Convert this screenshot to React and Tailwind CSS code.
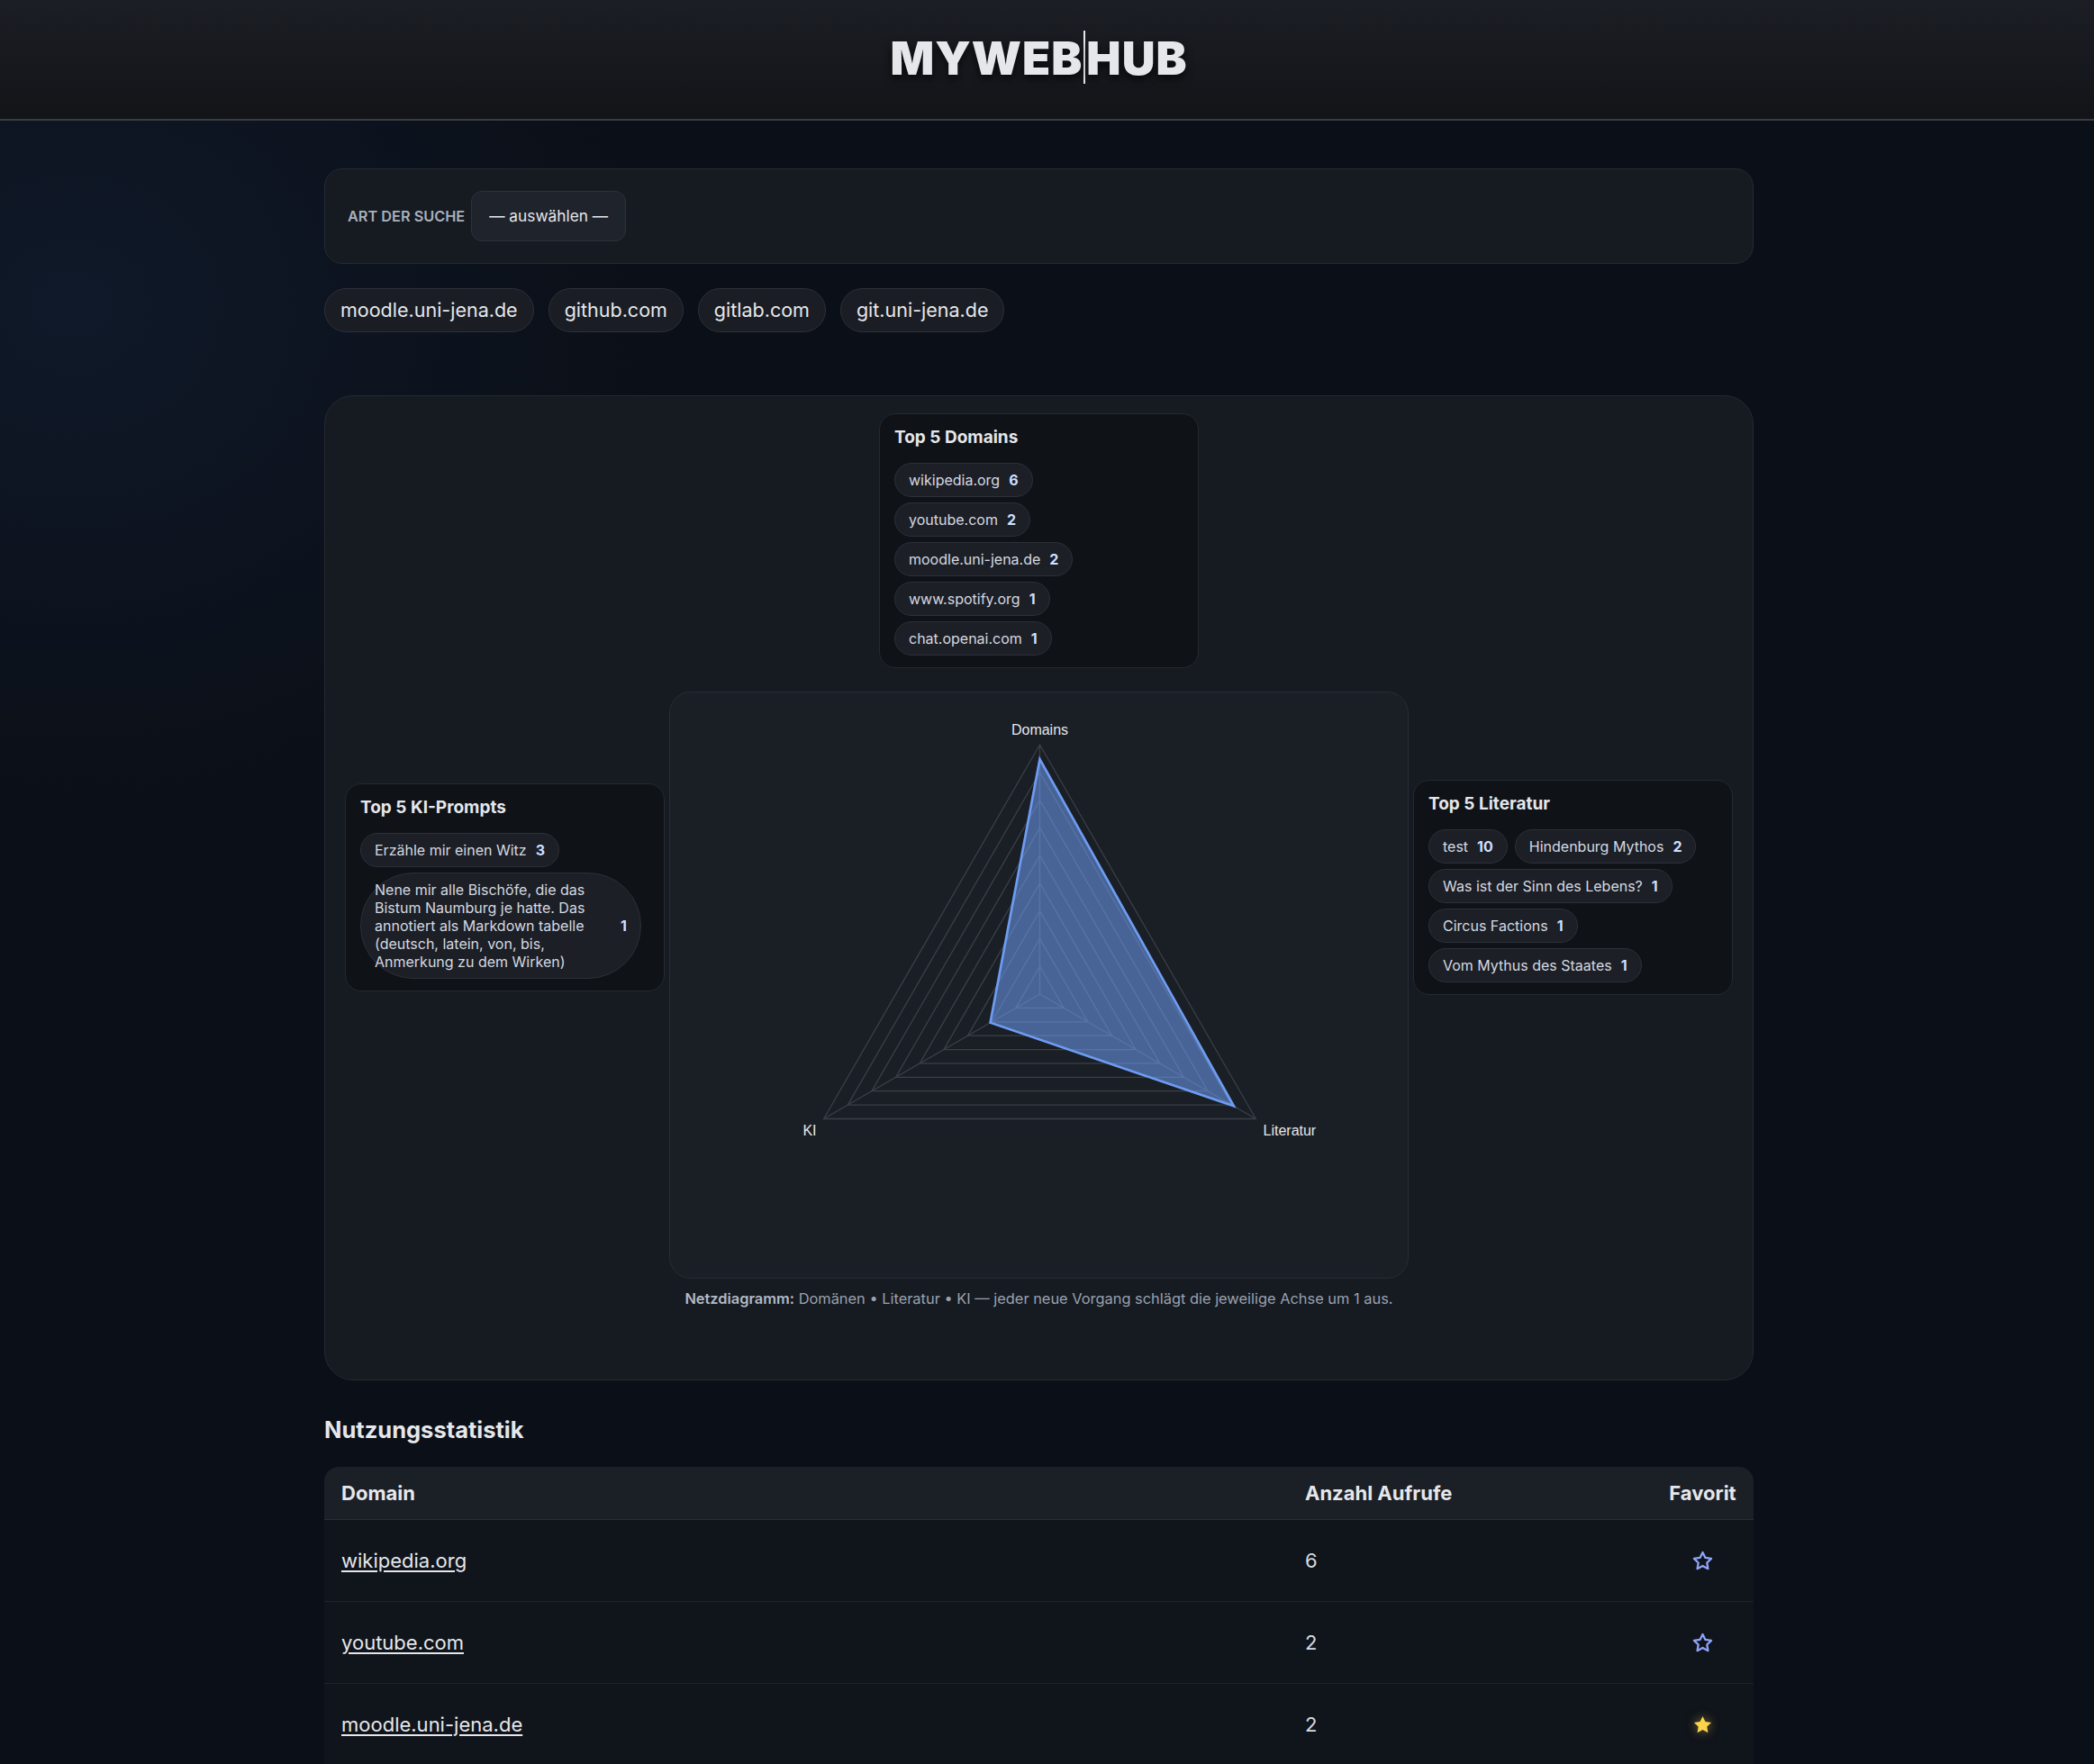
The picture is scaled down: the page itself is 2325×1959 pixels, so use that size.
import React from 'react';

const quickLinks = ['moodle.uni-jena.de', 'github.com', 'gitlab.com', 'git.uni-jena.de'];

const topDomains = [
  ['wikipedia.org', 6],
  ['youtube.com', 2],
  ['moodle.uni-jena.de', 2],
  ['www.spotify.org', 1],
  ['chat.openai.com', 1],
];

const topPrompts = [
  ['Erzähle mir einen Witz', 3],
  ['Nene mir alle Bischöfe, die das Bistum Naumburg je hatte. Das annotiert als Markdown tabelle (deutsch, latein, von, bis, Anmerkung zu dem Wirken)', 1],
];

const topLiteratur = [
  ['test', 10],
  ['Hindenburg Mythos', 2],
  ['Was ist der Sinn des Lebens?', 1],
  ['Circus Factions', 1],
  ['Vom Mythus des Staates', 1],
];

const stats = [
  { domain: 'wikipedia.org', count: 6, fav: false },
  { domain: 'youtube.com', count: 2, fav: false },
  { domain: 'moodle.uni-jena.de', count: 2, fav: true },
  { domain: 'www.spotify.org', count: 1, fav: false },
  { domain: 'chat.openai.com', count: 1, fav: false },
];

function Chip({ label, count }) {
  return (
    <span className="inline-flex max-w-[312px] items-center gap-[10px] rounded-full border border-[#2c3038] bg-[#1c1f26] px-[15px] py-[8px] text-[16px] leading-[20px] text-[#d5d9e0]">
      <span className="min-w-0">{label}</span>
      <b className="shrink-0 font-bold text-[#cddfff]">{count}</b>
    </span>
  );
}

function TopBox({ title, items, column, className = '' }) {
  return (
    <div className={`w-[355px] rounded-[18px] border border-[#252930] bg-[#0f1217] px-[16px] pt-[13px] pb-[13px] ${className}`}>
      <h3 className="mb-[15px] text-[19px] font-bold leading-[26px] text-[#e5e7eb]">{title}</h3>
      <div className={column ? 'flex flex-col items-start gap-[6px]' : 'flex flex-wrap gap-x-[8px] gap-y-[6px]'}>
        {items.map(([label, count]) => (
          <Chip key={label} label={label} count={count} />
        ))}
      </div>
    </div>
  );
}

function Radar() {
  const cx = 410, cy = 335, R = 277;
  const angles = [-90, 30, 150].map((a) => (a * Math.PI) / 180);
  const pt = (r, i) => [cx + r * Math.cos(angles[i]), cy + r * Math.sin(angles[i])];
  const poly = (rs) => rs.map((r, i) => pt(r, i).join(',')).join(' ');
  const rings = Array.from({ length: 9 }, (_, k) => (R * (k + 1)) / 9);
  // Domains, Literatur, KI
  const values = [0.942, 0.898, 0.229];

  return (
    <svg viewBox="0 0 818 650" className="block h-full w-full">
      {rings.map((r) => (
        <polygon key={r} points={poly([r, r, r])} fill="none" stroke="#3b3f47" strokeWidth="1.3" />
      ))}
      {[0, 1, 2].map((i) => {
        const [x, y] = pt(R, i);
        return <line key={i} x1={cx} y1={cy} x2={x} y2={y} stroke="#3b3f47" strokeWidth="1.3" />;
      })}
      <polygon
        points={poly(values.map((v) => v * R))}
        fill="rgba(112,158,245,0.55)"
        stroke="#6d9cf2"
        strokeWidth="2.7"
      />
      <g fill="#e5e7eb" fontSize="16" fontFamily="'Liberation Sans', Arial, sans-serif">
        <text x={cx} y="47" textAnchor="middle">Domains</text>
        <text x="658" y="492">Literatur</text>
        <text x="162" y="492" textAnchor="end">KI</text>
      </g>
    </svg>
  );
}

function Star({ filled }) {
  const points = '12,2 15.09,8.26 22,9.27 17,14.14 18.18,21.02 12,17.77 5.82,21.02 7,14.14 2,9.27 8.91,8.26';
  if (filled) {
    return (
      <svg width="23" height="23" viewBox="0 0 24 24" className="drop-shadow-[0_0_6px_rgba(252,211,77,0.5)]">
        <polygon points={points} fill="#fcd34d" />
      </svg>
    );
  }
  return (
    <svg width="23" height="23" viewBox="0 0 24 24">
      <polygon points={points} fill="none" stroke="#8fa3f8" strokeWidth="2.4" strokeLinejoin="round" />
    </svg>
  );
}

export default function App() {
  return (
    <div className="min-h-screen bg-[#0b0f17] bg-[radial-gradient(650px_560px_at_80px_340px,#0f1929,transparent)] font-['Inter',sans-serif] text-[#e5e7eb]">
      <header className="h-[134px] border-b-2 border-[#3a3c41] bg-[linear-gradient(180deg,#1b1e24,#121418)] pr-[18px]">
        <div className="flex h-full items-center justify-center pb-[5px]">
          <h1 className="text-[51px] font-black leading-none tracking-[0.02em] text-[#e5e7eb] [text-shadow:0_4px_10px_rgba(0,0,0,0.7)]">
            MYWEB
            <span className="mx-[1px] inline-block h-[59px] w-[2px] bg-[#e5e7eb] align-[-10px]" />
            HUB
          </h1>
        </div>
      </header>

      <main className="pr-[18px] pb-[80px]">
        <div className="mx-auto w-[1587px] pt-[53px]">
          <section className="flex items-center gap-[7px] rounded-[20px] border border-[#262a32] bg-[#161a21] px-[25px] py-[24px]">
            <label className="text-[16.3px] font-semibold uppercase text-[#a9b1be]">Art der Suche</label>
            <button className="flex h-[56px] items-center rounded-[12px] border border-[#2d323a] bg-[#1f232b] px-[19px] text-[17.3px] text-[#e5e7eb]">
              — auswählen —
            </button>
          </section>

          <div className="mt-[27px] flex gap-[16px]">
            {quickLinks.map((l) => (
              <a
                key={l}
                className="flex h-[49px] items-center rounded-full border border-[#2c3038] bg-[#1a1d24] px-[17px] text-[21.5px] text-[#e5e7eb]"
              >
                {l}
              </a>
            ))}
          </div>

          <section className="mt-[70px] rounded-[32px] border border-[#252930] bg-[#161a21] px-[22px] pt-[19px] pb-[78px]">
            <div className="grid grid-cols-[355px_1fr_355px] gap-x-[5px] gap-y-[26px]">
              <TopBox title="Top 5 Domains" items={topDomains} column className="col-start-2 justify-self-center" />
              <TopBox title="Top 5 KI-Prompts" items={topPrompts} className="col-start-1 mt-[102px] self-start" />
              <div className="h-[652px] rounded-[24px] border border-[#282c34] bg-[#1a1e25]">
                <Radar />
              </div>
              <TopBox title="Top 5 Literatur" items={topLiteratur} className="mt-[98px] self-start" />
            </div>
            <p className="mt-[10px] text-center text-[16.4px] leading-[24px] text-[#9aa2af]">
              <b className="font-semibold text-[#b3bac6]">Netzdiagramm:</b> Domänen • Literatur • KI — jeder neue Vorgang schlägt die jeweilige Achse um 1 aus.
            </p>
          </section>

          <h2 className="mt-[39px] mb-[25px] text-[25.5px] font-bold leading-[32px] text-[#e5e7eb]">Nutzungsstatistik</h2>

          <div className="overflow-hidden rounded-t-[16px]">
            <div className="grid h-[59px] grid-cols-[1071px_403px_113px] items-center border-b border-[#2a2e35] bg-[#1b1f26] text-[22px] font-bold text-[#e5e7eb]">
              <div className="px-[19px]">Domain</div>
              <div className="px-[18px]">Anzahl Aufrufe</div>
              <div className="px-[16px] text-center">Favorit</div>
            </div>
            {stats.map((s) => (
              <div
                key={s.domain}
                className="grid h-[91px] grid-cols-[1071px_403px_113px] items-center border-b border-[#1f232a] bg-[#10141b] text-[22px]"
              >
                <div className="px-[19px]">
                  <a className="text-[#e5e7eb] underline underline-offset-[3px]">{s.domain}</a>
                </div>
                <div className="px-[18px] text-[#d7dbe2]">{s.count}</div>
                <div className="flex justify-center px-[16px]">
                  <Star filled={s.fav} />
                </div>
              </div>
            ))}
          </div>
        </div>
      </main>
    </div>
  );
}
